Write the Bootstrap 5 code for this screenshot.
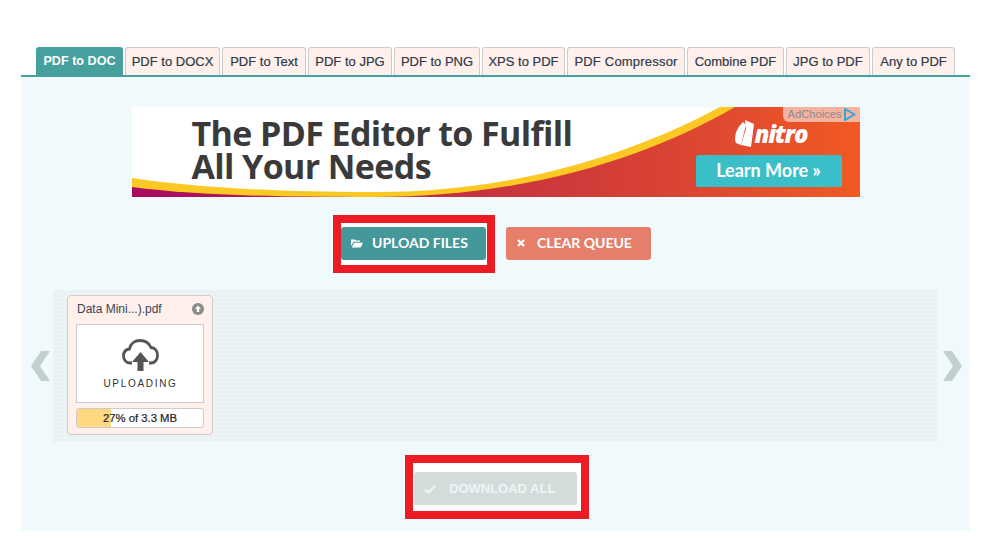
<!DOCTYPE html>
<html lang="en">
<head>
<meta charset="utf-8">
<title>PDF to DOC</title>
<link href="https://cdn.jsdelivr.net/npm/bootstrap@5.3.0/dist/css/bootstrap.min.css" rel="stylesheet">
<style>
html,body{height:550px;overflow:hidden;background:#fff}
body{font-family:"Liberation Sans",Arial,sans-serif;color:#333}
.page-wrap{padding:47px 22px 0 21px}
.tab-row{display:flex;gap:2px;padding-left:15px;border-bottom:2px solid #45a09e;height:30px;margin:0}
.tab-link{display:block;height:28px;line-height:27px;padding:0;text-align:center;font-size:13px;color:#2f3a4a;background:#fff0ec;border:1px solid #ccc;border-bottom:0;border-radius:3px 3px 0 0;text-decoration:none;-webkit-text-stroke:.2px #2f3a4a;white-space:nowrap}
.tab-active{background:#45a09e;border-color:#45a09e;color:#fff;font-weight:700;font-size:12.600px;-webkit-text-stroke:0}
.tab-link:nth-child(1){width:87px}
.tab-link:nth-child(2){width:95px}
.tab-link:nth-child(3){width:84px}
.tab-link:nth-child(4){width:84px}
.tab-link:nth-child(5){width:86px}
.tab-link:nth-child(6){width:83px}
.tab-link:nth-child(7){width:118px;letter-spacing:.2px}
.tab-link:nth-child(8){width:97px}
.tab-link:nth-child(9){width:84px}
.tab-link:nth-child(10){width:83px}
.main-panel{background:#f0f9fb;height:454px;padding-top:30px}
.banner{position:relative;width:728px;height:90px;margin:0 auto;overflow:hidden;background:#fff}
.banner-art{position:absolute;inset:0;width:728px;height:90px}
.banner-head{position:absolute;left:60px;top:10px;font:700 34px/33px "Open Sans",sans-serif;color:#3a3a3a;margin:0;letter-spacing:-.62px}
.ad-tag{position:absolute;right:0;top:0;height:15px;width:77px;background:#f6b3a0;border-bottom-left-radius:6px;font:11.200px/15px "Liberation Sans",sans-serif;color:#8a8a8a;padding-left:5px}
.ad-tag svg{position:absolute;left:61px;top:1px}
.nitro-word{position:absolute;left:623px;top:15px;font:italic 800 24px/24px "Open Sans",sans-serif;color:#fff;letter-spacing:-1.2px}
.learn-btn{position:absolute;left:564px;top:48px;width:146px;height:32px;background:#3abfc9;border-radius:2px;color:#fff;font:700 18px/31px Lato,sans-serif;text-align:center}
.act-row{display:flex;justify-content:center;align-items:flex-start;gap:11px;margin:18px 0 17px;padding-right:7px}
.mark-box{border:8px solid #ed1c24;background:#fff;padding:4px 1px 5px 0}
.act-btn{display:flex;align-items:center;height:33px;width:145px;border:0;border-radius:3px;color:#fff;font:700 14px/31px Lato,sans-serif;padding:0 0 3px 10px;text-transform:uppercase}
.act-btn svg{margin-right:9px;flex:none;margin-top:2px}
.act-teal{background:#45989a}
.act-salmon{background:#e57f6c;margin-top:12px}
.act-salmon svg{margin-right:11px}
.act-off{background:#d2dcdb;color:#eef5f5;width:163px;font:700 13px/31px "Liberation Sans",sans-serif;padding-bottom:1px}
.off-label{margin-left:4px}
.queue-row{position:relative;margin:0 32px;height:152px;padding:5px 14px;background-color:#ecf4f5;background-image:radial-gradient(#e7f0f0 1px,transparent 1px);background-size:4px 4px}
.nav-arrow{position:absolute;top:61px;width:19px;height:30px}
.arrow-prev{left:-22px}
.arrow-next{right:-24px}
.file-card{width:146px;height:140px;background:#fff0ec;border:1px solid #d5c9c6;border-radius:4px;padding:0 8px}
.file-head{display:flex;justify-content:space-between;align-items:center;height:28px;font-size:12px;color:#3b4250;padding:0 0 2px 1px}
.file-thumb{height:79px;background:#fff;border:1px solid #ccc;display:flex;flex-direction:column;align-items:center;padding-top:14px}
.thumb-label{font-size:10px;letter-spacing:1.700px;color:#333;margin:7px 0 0 1px;line-height:12px}
.progress-box{position:relative;height:20px;margin-top:5px;background:#fff;border:1px solid #ccc;border-radius:3px;overflow:hidden;font-size:11.300px;line-height:18px;text-align:center;color:#222;-webkit-text-stroke:.2px #222}
.progress-fill{position:absolute;left:0;top:0;bottom:0;background:#ffd87f}
.progress-txt{position:relative}
.dl-row{display:flex;justify-content:center;margin-top:13px;padding-left:3px}
.dl-box{padding:9px 4px 6px 1px}
</style>
</head>
<body>
<div class="page-wrap">
  <nav class="tab-row">
    <a class="tab-link tab-active" href="#">PDF to DOC</a>
    <a class="tab-link" href="#">PDF to DOCX</a>
    <a class="tab-link" href="#">PDF to Text</a>
    <a class="tab-link" href="#">PDF to JPG</a>
    <a class="tab-link" href="#">PDF to PNG</a>
    <a class="tab-link" href="#">XPS to PDF</a>
    <a class="tab-link" href="#">PDF Compressor</a>
    <a class="tab-link" href="#">Combine PDF</a>
    <a class="tab-link" href="#">JPG to PDF</a>
    <a class="tab-link" href="#">Any to PDF</a>
  </nav>
  <main class="main-panel">
    <div class="banner">
      <svg class="banner-art" viewBox="0 0 728 90" aria-hidden="true">
        <defs><linearGradient id="bandGrad" x1="0" x2="1" y1="0" y2="0"><stop offset="0" stop-color="#a80a62"/><stop offset=".45" stop-color="#c5303f"/><stop offset=".75" stop-color="#da4434"/><stop offset="1" stop-color="#f15a22"/></linearGradient></defs>
        <rect width="728" height="90" fill="url(#bandGrad)"/>
        <path d="M0 0H603C520 48 400 90 240 90C140 90 60 88 0 80Z" fill="#fcc824"/>
        <path d="M0 0H588C510 42 390 86 240 85C140 85 60 80 0 71Z" fill="#fff"/>
        <path d="M603 33C603 25 606 20 611 15L614 18L609 38L604 36Z" fill="#fff"/>
        <path d="M613 13L622 17L619 40L609 38L614 22Z" fill="#fff"/>
      </svg>
      <h1 class="banner-head">The PDF Editor to Fulfill<br>All Your Needs</h1>
      <div class="ad-tag">AdChoices<svg width="12" height="13" viewBox="0 0 12 13" aria-hidden="true"><path d="M1 1L10.500 6.500L1 12Z" fill="none" stroke="#2ea9d8" stroke-width="2"/></svg></div>
      <div class="nitro-word">nitro</div>
      <div class="learn-btn">Learn More »</div>
    </div>
    <div class="act-row">
      <div class="mark-box">
        <button class="act-btn act-teal" type="button">
          <svg width="12" height="10" viewBox="0 0 12 10"><path d="M0 1.500h4l1 1h4v1.200H2.500L0 8Z" fill="#fff"/><path d="M3 4.700h9L9.500 9.500H0.800Z" fill="#fff"/></svg>
          Upload Files
        </button>
      </div>
      <button class="act-btn act-salmon" type="button">
        <svg width="10" height="10" viewBox="0 0 10 10"><path d="M2 2l6 6M8 2l-6 6" stroke="#fff" stroke-width="2.200"/></svg>
        Clear Queue
      </button>
    </div>
    <section class="queue-row">
      <svg class="nav-arrow arrow-prev" viewBox="0 0 19 30"><path d="M19 0H10L0 15L10 30H19L9 15Z" fill="#c3cfcd"/></svg>
      <svg class="nav-arrow arrow-next" viewBox="0 0 19 30"><path d="M0 0H9L19 15L9 30H0L10 15Z" fill="#c3cfcd"/></svg>
      <article class="file-card">
        <div class="file-head">
          <span>Data Mini...).pdf</span>
          <svg width="12" height="12" viewBox="0 0 12 12"><circle cx="6" cy="6" r="6" fill="#8a8a8a"/><path d="M6 2.500L9 6H7.200V9H4.800V6H3Z" fill="#fff"/></svg>
        </div>
        <div class="file-thumb">
          <svg width="37" height="32" viewBox="0 0 37 32"><path d="M10 24H8C4 24 1.500 20.500 1.500 17C1.500 13 3.500 10.500 7.500 10C8.500 4.500 13 1.500 18 1.500C23 1.500 27 4 29 8.500C33 8.500 35.500 12 35.500 16.500C35.500 20.500 33 24 29 24H27" fill="none" stroke="#555" stroke-width="2.800"/><path d="M18.500 13L27 23H21.500V32H15.500V23H10Z" fill="#555"/></svg>
          <div class="thumb-label">UPLOADING</div>
        </div>
        <div class="progress-box">
          <div class="progress-fill" style="width:27%"></div>
          <span class="progress-txt">27% of 3.3 MB</span>
        </div>
      </article>
    </section>
    <div class="dl-row">
      <div class="mark-box dl-box">
        <button class="act-btn act-off" type="button" disabled>
          <svg width="12" height="10" viewBox="0 0 12 10"><path d="M1 5.500L4.500 8.500L11 1.500" fill="none" stroke="#eef5f5" stroke-width="2.200"/></svg>
          <span class="off-label">Download All</span>
        </button>
      </div>
    </div>
  </main>
</div>
<script src="https://cdn.jsdelivr.net/npm/bootstrap@5.3.0/dist/js/bootstrap.bundle.min.js"></script>
</body>
</html>
